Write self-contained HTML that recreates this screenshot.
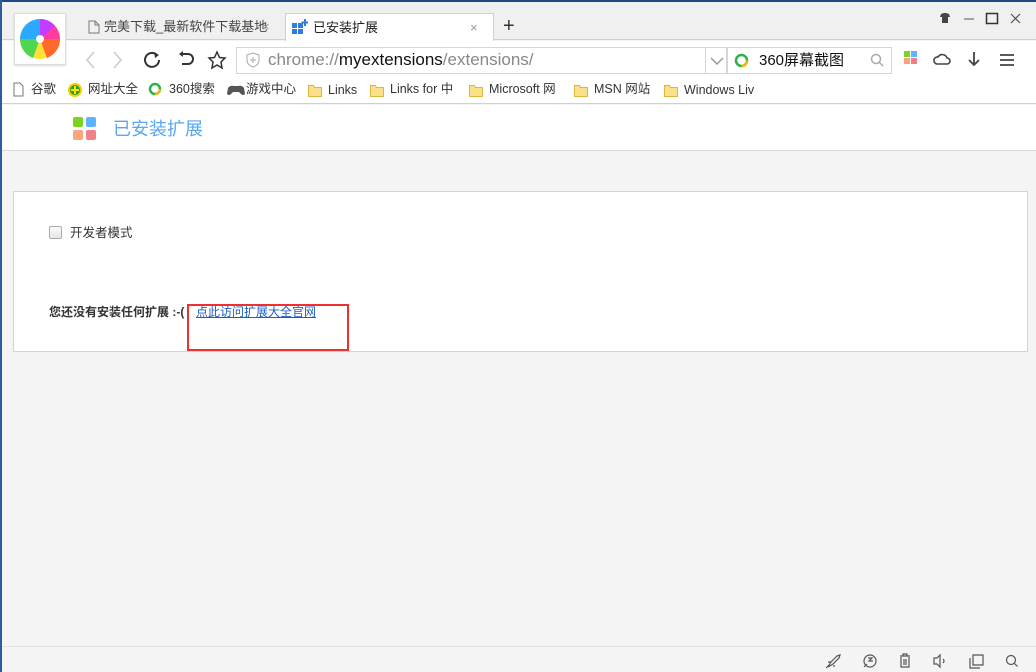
<!DOCTYPE html>
<html><head><meta charset="utf-8"><style>
*{margin:0;padding:0;box-sizing:border-box}
body{width:1036px;height:672px;overflow:hidden;background:#f4f4f4;font-family:"Liberation Sans","Noto Sans CJK SC",sans-serif;position:relative;font-size:12px;color:#333}
.a{position:absolute}
.sv{position:absolute}
.bm{position:absolute;top:0;line-height:18px;font-size:12.5px;color:#333;white-space:nowrap}
</style></head><body>
<div class="a" style="left:0;top:0;width:1036px;height:2px;background:#1b4a86"></div>
<div class="a" style="left:0;top:0;width:2px;height:672px;background:#2a5d9a"></div>
<div class="a" style="left:2px;top:2px;width:1034px;height:38px;background:#f0f0f0;border-bottom:1px solid #d0d0d0"></div>
<!-- tabs -->
<div class="a" style="left:82px;top:13px;width:200px;height:28px;font-size:13px;color:#444;padding:6px 0 0 22px;line-height:16px">完美下载_最新软件下载基地<span style="position:absolute;left:180px;top:6px;color:#999">×</span></div>
<svg class="sv" style="left:88px;top:20px" width="12" height="14"><path d="M1 1h6l4 4v8H1z M7 1v4h4" fill="none" stroke="#777"/></svg>
<div class="a" style="left:285px;top:13px;width:209px;height:28px;background:#fff;border:1px solid #d0d0d0;border-bottom:none;font-size:13px;color:#222;padding:6px 0 0 27px;line-height:16px">已安装扩展<span style="position:absolute;left:184px;top:6px;color:#999">×</span></div>
<svg class="sv" style="left:292px;top:19px" width="16" height="16"><rect x="0" y="4" width="5" height="5" fill="#2f7be0"/><rect x="6" y="4" width="5" height="5" fill="#2f7be0"/><rect x="0" y="10" width="5" height="5" fill="#2f7be0"/><rect x="6" y="10" width="5" height="5" fill="#2f7be0"/><path d="M13 0v7M9.5 3.5h7" stroke="#2f7be0" stroke-width="2"/></svg>
<div class="a" style="left:503px;top:15px;font-size:20px;color:#333">+</div>
<!-- window controls -->
<svg class="sv" style="left:938px;top:12px" width="90" height="14"><path d="M3 2l3-1h2l3 1 1 3h-2v6H4V5H2z" fill="#444"/><path d="M26 7h10" stroke="#555"/><rect x="48.5" y="1.5" width="11" height="10" fill="none" stroke="#333" stroke-width="1.5"/><path d="M73 2l9 9M82 2l-9 9" stroke="#555" stroke-width="1.2"/></svg>
<!-- toolbar -->
<div class="a" style="left:2px;top:41px;width:1034px;height:38px;background:#fff"></div>
<div class="a" style="left:14px;top:13px;width:52px;height:52px;background:#fff;border:1px solid #ddd;box-shadow:0 1px 2px rgba(0,0,0,.15)"></div>
<svg class="sv" style="left:19px;top:18px" width="42" height="42" viewBox="0 0 42 42"><circle cx="21" cy="21" r="20" fill="#ffe135"/><path d="M21 21L21 1A20 20 0 0 1 41 21z" fill="#ff3da0"/><path d="M21 21L41 21A20 20 0 0 1 28 40z" fill="#ff6a2a"/><path d="M21 21L1 21A20 20 0 0 1 21 1z" fill="#29a9ff"/><path d="M21 21L1 21A20 20 0 0 0 14 40z" fill="#4ed64e"/><path d="M21 21L21 1A20 20 0 0 1 36 8z" fill="#c43cff"/><circle cx="21" cy="21" r="4" fill="#fff"/></svg>
<svg class="sv" style="left:80px;top:50px" width="150" height="20"><path d="M14 2l-7 8 7 8" fill="none" stroke="#ccc" stroke-width="1.6"/><path d="M34 2l7 8-7 8" fill="none" stroke="#ccc" stroke-width="1.6"/><path d="M77 5a7 7 0 1 0 2 5" fill="none" stroke="#333" stroke-width="2"/><path d="M74 2l5 3-4 3" fill="#333"/><path d="M100 4h8a5 5 0 0 1 0 10h-6" fill="none" stroke="#333" stroke-width="2"/><path d="M99 4l4-3v6z" fill="#333"/><path d="M137 2l2.5 5.5 5.5.5-4 4 1 6-5-3-5 3 1-6-4-4 5.5-.5z" fill="none" stroke="#333" stroke-width="1.5"/></svg>
<div class="a" style="left:236px;top:47px;width:491px;height:27px;border:1px solid #d6d6d6;background:#fff"></div>
<div class="a" style="left:705px;top:47px;width:1px;height:27px;background:#d6d6d6"></div>
<svg class="sv" style="left:246px;top:52px" width="14" height="16"><path d="M7 1l6 2v5c0 4-3 6-6 7-3-1-6-3-6-7V3z" fill="none" stroke="#aaa"/><path d="M7 5v6M4 8h6" stroke="#aaa"/></svg>
<div class="a" style="left:268px;top:50px;font-size:17px;line-height:20px;color:#888">chrome://<span style="color:#111">myextensions</span>/extensions/</div>
<svg class="sv" style="left:709px;top:56px" width="16" height="10"><path d="M2 2l6 6 6-6" fill="none" stroke="#999" stroke-width="1.5"/></svg>
<div class="a" style="left:727px;top:47px;width:165px;height:27px;border:1px solid #d6d6d6;background:#fff"></div>
<svg class="sv" style="left:734px;top:53px" width="16" height="16"><circle cx="7.5" cy="7.5" r="5.5" fill="none" stroke="#2bb24c" stroke-width="2.5"/><path d="M13 7.5a5.5 5.5 0 0 1-5.5 5.5" fill="none" stroke="#f7b500" stroke-width="2.5"/></svg>
<div class="a" style="left:759px;top:51px;font-size:15px;line-height:19px;color:#111">360屏幕截图</div>
<svg class="sv" style="left:870px;top:53px" width="14" height="14"><circle cx="6" cy="6" r="4.5" fill="none" stroke="#aaa" stroke-width="1.5"/><path d="M9 9l4 4" stroke="#aaa" stroke-width="1.5"/></svg>
<svg class="sv" style="left:904px;top:51px" width="14" height="14"><rect x="0" y="0" width="6" height="6" fill="#7ad32c"/><rect x="7" y="0" width="6" height="6" fill="#5cb6ff"/><rect x="0" y="7" width="6" height="6" fill="#ffa27a"/><rect x="7" y="7" width="6" height="6" fill="#f07f88"/></svg>
<svg class="sv" style="left:933px;top:51px" width="18" height="16"><path d="M4 13h10a3 3 0 0 0 0-6 5 5 0 0 0-9-1 3.5 3.5 0 0 0-1 7z" fill="none" stroke="#444" stroke-width="1.6"/></svg>
<svg class="sv" style="left:966px;top:51px" width="16" height="16"><path d="M8 1v13M3 9l5 5 5-5" fill="none" stroke="#444" stroke-width="1.8"/></svg>
<svg class="sv" style="left:999px;top:53px" width="16" height="14"><path d="M1 2h14M1 7h14M1 12h14" stroke="#444" stroke-width="1.8"/></svg>
<!-- bookmarks -->
<div class="a" style="left:2px;top:79px;width:1034px;height:25px;background:#fff;border-bottom:1px solid #d0d0d0"></div>
<div class="a" style="left:0;top:80px;width:1036px;height:18px">
<div class="bm" style="left:31px">谷歌</div><div class="bm" style="left:88px">网址大全</div><div class="bm" style="left:169px">360搜索</div><div class="bm" style="left:246px">游戏中心</div><div class="bm" style="left:328px;top:1px">Links</div><div class="bm" style="left:390px">Links for 中</div><div class="bm" style="left:489px">Microsoft 网</div><div class="bm" style="left:594px">MSN 网站</div><div class="bm" style="left:684px;top:1px">Windows Liv</div></div>
<svg class="sv" style="left:0;top:80px" width="700" height="20">
<path d="M14 3h6l3 3v10h-9z" fill="none" stroke="#777"/>
<circle cx="75" cy="10" r="7" fill="#f5d000"/><circle cx="75" cy="10" r="5" fill="#2a9d2a"/><path d="M75 6v8M71 10h8" stroke="#ffe000" stroke-width="2"/>
<circle cx="155" cy="9" r="5" fill="none" stroke="#2bb24c" stroke-width="2.5"/><path d="M160 9a5 5 0 0 1-5 5" fill="none" stroke="#f7b500" stroke-width="2.5"/>
<path d="M228 8q2-3 6-2h4q4-1 6 2l1 6q-2 2-4 0l-2-2h-6l-2 2q-2 2-4 0z" fill="#555"/>
<g fill="#fbe08a" stroke="#e0b440"><path d="M308.5 5.5h5l1 2h7v9h-13z"/><path d="M370.5 5.5h5l1 2h7v9h-13z"/><path d="M469.5 5.5h5l1 2h7v9h-13z"/><path d="M574.5 5.5h5l1 2h7v9h-13z"/><path d="M664.5 5.5h5l1 2h7v9h-13z"/></g>
</svg>
<!-- page header -->
<div class="a" style="left:2px;top:105px;width:1034px;height:46px;background:#fff;border-bottom:1px solid #d8d8d8"></div>
<svg class="sv" style="left:73px;top:117px" width="24" height="24"><rect x="0" y="0" width="10" height="10" rx="2" fill="#7ed321"/><rect x="13" y="0" width="10" height="10" rx="2" fill="#5ab4ff"/><rect x="0" y="13" width="10" height="10" rx="2" fill="#ffa57a"/><rect x="13" y="13" width="10" height="10" rx="2" fill="#f0818a"/></svg>
<div class="a" style="left:113px;top:118px;font-size:18px;line-height:22px;color:#5aa6f0">已安装扩展</div>
<!-- panel -->
<div class="a" style="left:13px;top:191px;width:1015px;height:161px;background:#fff;border:1px solid #d4d4d4"></div>
<div class="a" style="left:49px;top:226px;width:13px;height:13px;border:1px solid #aaa;border-radius:2px;background:linear-gradient(#fafafa,#e6e6e6)"></div>
<div class="a" style="left:70px;top:225px;font-size:12.5px;line-height:16px;color:#333">开发者模式</div>
<div class="a" style="left:49px;top:305px;font-size:12px;line-height:15px;font-weight:bold;color:#333">您还没有安装任何扩展 :-(</div>
<div class="a" style="left:196px;top:305px;font-size:12px;line-height:15px;color:#1d5ec4;text-decoration:underline">点此访问扩展大全官网</div>
<div class="a" style="left:187px;top:304px;width:162px;height:47px;border:2px solid #f03030"></div>
<!-- status bar -->
<div class="a" style="left:2px;top:646px;width:1034px;height:1px;background:#e2e2e2"></div>
<svg class="sv" style="left:824px;top:652px" width="200" height="18" fill="none" stroke="#555" stroke-width="1.2">
<path d="M4 15l3-5 6-6 3-1-1 3-6 6zM7 10l-3 0M10 13v2M2 16l3-3"/>
<circle cx="46" cy="9" r="6"/><path d="M44 6l4 0-3 3h4M40 15l3-3"/>
<path d="M76 4h10M79 4V2h4v2M77 5v10h8V5M80 7v6M82 7v6"/>
<path d="M110 6h3l3-3v12l-3-3h-3zM119 7q2 2 0 4"/>
<path d="M146 6v10h10M149 3h10v10h-10z"/>
<circle cx="187" cy="8" r="4.5"/><path d="M190.5 11.5l3 3"/>
</svg>
</body></html>
